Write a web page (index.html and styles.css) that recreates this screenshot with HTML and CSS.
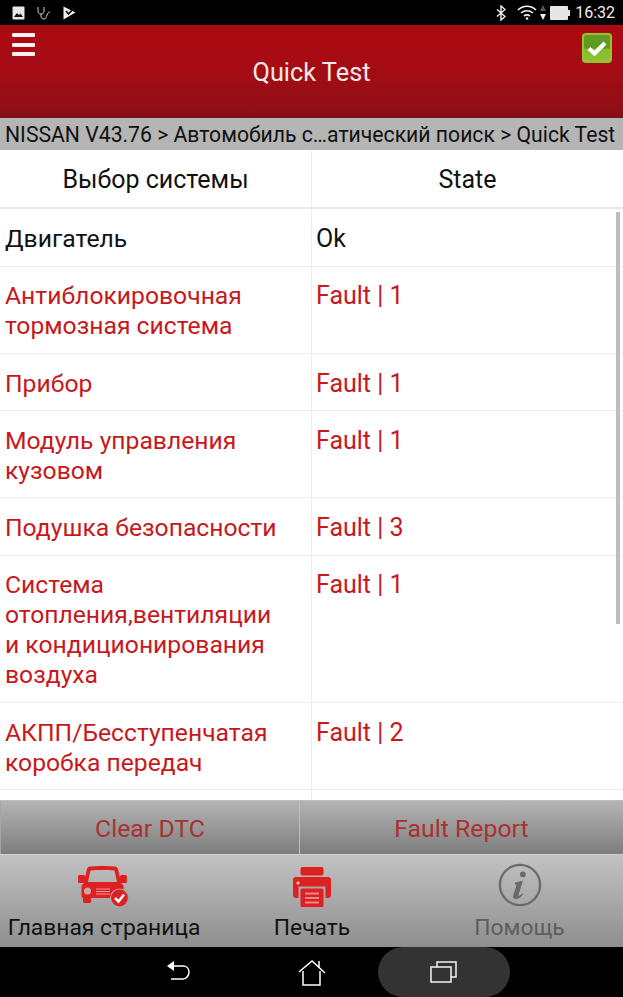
FILE: index.html
```html
<!DOCTYPE html>
<html lang="en">
<head>
    <meta charset="UTF-8">
    <meta name="viewport" content="width=device-width, initial-scale=1.0">
    <title>Quick Test</title>
    <link rel="stylesheet" href="styles.css">
</head>
<body>
    <div class="app">
        <div class="status-bar">
            <div class="status-left">
                <svg width="13" height="14" viewBox="0 0 13 14"><rect x="0.5" y="0.5" width="12" height="13" rx="1" fill="#e8e8e8"/><path d="M2 11l3-4 2 2 1.500-1.500L11 11z" fill="#111"/></svg>
                <svg width="14" height="14" viewBox="0 0 14 14" fill="none" stroke="#ccc" stroke-width="1"><path d="M1 1v4c0 2 1 3 3 3s3-1 3-3V1"/><path d="M4 8v2c0 2 1 3 3 3s2-2 3-4 1-3 3-3"/></svg>
                <svg width="13" height="14" viewBox="0 0 13 14"><path d="M0.500 0.500l12 6-12 7z" fill="#eee"/><path d="M3 5l2.500 3L11 2" fill="none" stroke="#111" stroke-width="1.800"/></svg>
            </div>
            <div class="status-right">
                <svg width="10" height="16" viewBox="0 0 10 16" fill="none" stroke="#eee" stroke-width="1.400"><path d="M1 4.500l8 7-4 3.500V1l4 3.500-8 7"/></svg>
                <svg class="wifi" width="20" height="15" viewBox="0 0 20 15" fill="none" stroke="#f2f2f2" stroke-width="1.600"><path d="M1 5c5-5 13-5 18 0"/><path d="M4 8c3.500-3 8.500-3 12 0"/><path d="M7 11c2-1.500 4-1.500 6 0"/><circle cx="10" cy="13.500" r="1.300" fill="#f2f2f2" stroke="none"/></svg>
                <svg class="arrows" width="6" height="15" viewBox="0 0 6 15"><path d="M3 0l3 6H0z" fill="#555"/><path d="M3 15l3-6H0z" fill="#eee"/></svg>
                <svg class="battery" width="20" height="14" viewBox="0 0 20 14"><rect width="18" height="14" rx="1" fill="#e6e6e6"/><rect x="18" y="4" width="2" height="6" fill="#e6e6e6"/></svg>
                <span class="clock">16:32</span>
            </div>
        </div>

        <div class="header">
            <div class="menu-btn"><span></span><span></span><span></span></div>
            <h1>Quick Test</h1>
            <div class="check-btn">
                <svg width="20" height="16" viewBox="0 0 20 16"><path d="M2 8.500l5.500 5L18 3" fill="none" stroke="#fff" stroke-width="4.200"/></svg>
            </div>
        </div>

        <div class="breadcrumb">NISSAN V43.76 &gt; Автомобиль с…атический поиск &gt; Quick Test</div>

        <div class="table-head">
            <div>Выбор системы</div>
            <div>State</div>
        </div>

        <div class="table-body">
            <div class="row ok">
                <div>Двигатель</div>
                <div class="state">Ok</div>
            </div>
            <div class="row">
                <div>Антиблокировочная тормозная система</div>
                <div class="state">Fault | 1</div>
            </div>
            <div class="row">
                <div>Прибор</div>
                <div class="state">Fault | 1</div>
            </div>
            <div class="row">
                <div>Модуль управления кузовом</div>
                <div class="state">Fault | 1</div>
            </div>
            <div class="row">
                <div>Подушка безопасности</div>
                <div class="state">Fault | 3</div>
            </div>
            <div class="row">
                <div>Система отопления,вентиляции и кондиционирования воздуха</div>
                <div class="state">Fault | 1</div>
            </div>
            <div class="row">
                <div>АКПП/Бесступенчатая коробка передач</div>
                <div class="state">Fault | 2</div>
            </div>
            <div class="row">
                <div>&nbsp;</div>
                <div class="state">&nbsp;</div>
            </div>
            <div class="scrollbar"></div>
        </div>

        <div class="actions">
            <button class="action">Clear DTC</button>
            <button class="action">Fault Report</button>
        </div>

        <div class="tabs">
            <div class="tab">
                <div class="tab-icon">
                    <svg width="52" height="41" viewBox="0 0 52 41">
                        <path fill-rule="evenodd" d="M9 3c.400-1.500 1.500-2.300 3-2.500 8-.700 17-.700 25 0 1.500.200 2.600 1 3 2.500l4 17H5zM12.500 4.500L10 16h29L36.500 4.500c-8-.600-16-.600-24 0z" fill="#df2020"/>
                        <rect x="0" y="9" width="7" height="8" rx="1.500" fill="#df2020"/>
                        <rect x="42" y="9" width="7" height="8" rx="1.500" fill="#df2020"/>
                        <rect x="3.500" y="18" width="42" height="14" rx="2.500" fill="#df2020"/>
                        <rect x="5" y="31" width="8" height="6" rx="1.500" fill="#df2020"/>
                        <circle cx="9.500" cy="25" r="3.500" fill="#c9a5a5"/>
                        <path d="M18 23h14M18 25.500h14M18 28h14" stroke="#e59a9a" stroke-width="1.100"/>
                        <circle cx="41.500" cy="32" r="9" fill="#df2020" stroke="#a8a8a8" stroke-width="1.200"/>
                        <path d="M37 32l3.500 3.500 5.500-7" fill="none" stroke="#fff" stroke-width="2.500"/>
                    </svg>
                </div>
                <span>Главная страница</span>
            </div>
            <div class="tab">
                <div class="tab-icon">
                    <svg width="38" height="40" viewBox="0 0 38 40">
                        <rect x="7.500" y="0" width="23" height="8.500" rx="2" fill="#df2020"/>
                        <rect x="0" y="10" width="38" height="21" rx="3" fill="#df2020"/>
                        <circle cx="5" cy="16" r="1.500" fill="#f3d0d0"/>
                        <rect x="5.500" y="19.500" width="27" height="20.500" fill="#a9a9a9"/>
                        <rect x="7.500" y="21.500" width="23" height="18.500" rx="1.500" fill="#df2020"/>
                        <path d="M12 26.500h14M12 31h14M12 35.500h14" stroke="#e88a8a" stroke-width="2"/>
                    </svg>
                </div>
                <span>Печать</span>
            </div>
            <div class="tab help">
                <div class="tab-icon">
                    <svg width="44" height="44" viewBox="0 0 46 46">
                        <circle cx="23" cy="23" r="21" fill="none" stroke="#6a6a6a" stroke-width="2.400"/>
                        <circle cx="26" cy="12" r="3" fill="#6a6a6a"/>
                        <path d="M18 20.500l8-2-4.500 15c-.300 1.200.800 1.500 4-1.500l.800 1c-3.500 4-5.800 4.800-8.500 4.500-2.200-.300-2.300-2-1.800-3.500l3.500-11.500-2 .300z" fill="#6a6a6a"/>
                    </svg>
                </div>
                <span>Помощь</span>
            </div>
        </div>

        <div class="nav-bar">
            <svg class="nav-back" width="26" height="26" viewBox="0 0 26 26" fill="none" stroke="#fff" stroke-width="1.500"><path d="M2 7h15c3.500 0 6 2.500 6 6s-2.500 7-6 7H5"/><path d="M1 7l7-5v10z" fill="#fff" stroke="none"/></svg>
            <svg class="nav-home" width="28" height="26" viewBox="0 0 28 26" fill="none" stroke="#fff" stroke-width="1.500"><path d="M1 12L14 1l13 12"/><path d="M21 1v6"/><path d="M5 11v14h17V11"/></svg>
            <div class="nav-recent">
                <svg width="28" height="24" viewBox="0 0 28 24" fill="none" stroke="#f4f4f4" stroke-width="1.500"><rect x="1" y="7" width="20" height="15"/><path d="M7 7V2h19v15h-5"/></svg>
            </div>
        </div>
    </div>
</body>
</html>
```

FILE: styles.css
```css
* {
    box-sizing: border-box;
}

body {
    margin: 0;
    font-family: Roboto, "Noto Sans", sans-serif;
    background-color: #fff;
    overflow: hidden;
}

.app {
    display: flex;
    flex-direction: column;
    height: 997px;
}

.status-bar {
    height: 25px;
    flex: none;
    background-color: #000;
    display: flex;
    justify-content: space-between;
    align-items: center;
    padding: 0 8px 0 12px;
}

.status-left {
    display: flex;
    align-items: center;
    gap: 12px;
}

.status-right {
    display: flex;
    align-items: center;
    color: #eee;
    font-size: 16px;
}

.status-right svg {
    margin-right: 11px;
}

.status-right .wifi {
    margin-right: 3px;
}

.status-right .arrows {
    margin-right: 4px;
}

.status-right .battery {
    margin-right: 5px;
}

.header {
    height: 93px;
    flex: none;
    position: relative;
    background: linear-gradient(#ad0a12 0%, #a40c14 50%, #8f0e16 92%, #7c1016 100%);
    display: flex;
    justify-content: center;
    padding-top: 33px;
}

.header h1 {
    margin: 0;
    font-size: 25.300px;
    line-height: 30px;
    font-weight: 400;
    color: #f6eaea;
}

.menu-btn {
    position: absolute;
    left: 12px;
    top: 8px;
    width: 23px;
    display: flex;
    flex-direction: column;
    gap: 5.500px;
}

.menu-btn span {
    height: 4px;
    background-color: #fbeeee;
    border-radius: 1px;
}

.check-btn {
    position: absolute;
    right: 11px;
    top: 8px;
    width: 30px;
    height: 30px;
    border-radius: 4px;
    border: 2px solid #9bc22a;
    background: linear-gradient(#5f9a22 0%, #5f9a22 50%, #86bc2c 55%, #8dc433 100%);
    display: flex;
    align-items: center;
    justify-content: center;
}

.breadcrumb {
    height: 32px;
    flex: none;
    background-color: #b5b5b5;
    color: #111;
    font-size: 21.200px;
    line-height: 33px;
    padding-left: 5px;
    white-space: nowrap;
}

.table-head {
    height: 59.300px;
    flex: none;
    display: grid;
    grid-template-columns: 312px 1fr;
    border-bottom: 2px solid #e6e6e6;
    font-size: 25px;
    color: #111;
    padding-top: 1px;
}

.table-head div {
    display: flex;
    align-items: center;
    justify-content: center;
}

.table-head div:first-child {
    border-right: 1px solid #ececec;
}

.table-body {
    flex: 1;
    min-height: 0;
    overflow: hidden;
    position: relative;
}

.row {
    display: grid;
    grid-template-columns: 312px 1fr;
    border-bottom: 1px solid #ececec;
    font-size: 24.700px;
    line-height: 30px;
    color: #c8181c;
}

.row.ok {
    color: #111;
}

.row div {
    padding: 14.700px 30px 11.600px 5px;
}

.row .state {
    font-size: 25px;
    padding-left: 4px;
}

.row div:first-child {
    border-right: 1px solid #ececec;
}

.scrollbar {
    position: absolute;
    right: 3px;
    top: 3px;
    width: 4px;
    height: 412px;
    background-color: #bdbdbd;
}

.actions {
    height: 54px;
    flex: none;
    display: grid;
    grid-template-columns: 299px 1fr;
    border-top: 1px solid #bbb;
}

.action {
    border: none;
    border-left: 1px solid #a5a5a5;
    background: linear-gradient(#b4b4b4, #7d7d7d);
    color: #ab3030;
    font-family: inherit;
    font-size: 24.800px;
    padding: 2px 0 0;
}

.action + .action {
    border-left: 1px solid #bdbdbd;
}

.tabs {
    height: 93px;
    flex: none;
    display: grid;
    grid-template-columns: 208px 208px 207px;
    border-top: 1px solid #d0d0d0;
    background: linear-gradient(#c2c2c2, #8e8e8e);
}

.tab {
    display: flex;
    flex-direction: column;
    align-items: center;
    justify-content: flex-end;
    font-size: 22.800px;
    line-height: 30px;
    color: #111;
    padding-bottom: 4px;
}

.tab-icon {
    height: 44px;
    margin-bottom: 6px;
    display: flex;
    align-items: flex-end;
}

.tab-icon svg {
    display: block;
}

.tab.help {
    color: #5e5e5e;
}

.nav-bar {
    height: 50px;
    flex: none;
    background-color: #000;
    position: relative;
}

.nav-back {
    position: absolute;
    left: 166px;
    top: 12px;
}

.nav-home {
    position: absolute;
    left: 298px;
    top: 13px;
}

.nav-recent {
    position: absolute;
    left: 378px;
    top: 0;
    width: 132px;
    height: 50px;
    border-radius: 25px;
    background-color: #333;
    display: flex;
    align-items: center;
    justify-content: center;
}
```
